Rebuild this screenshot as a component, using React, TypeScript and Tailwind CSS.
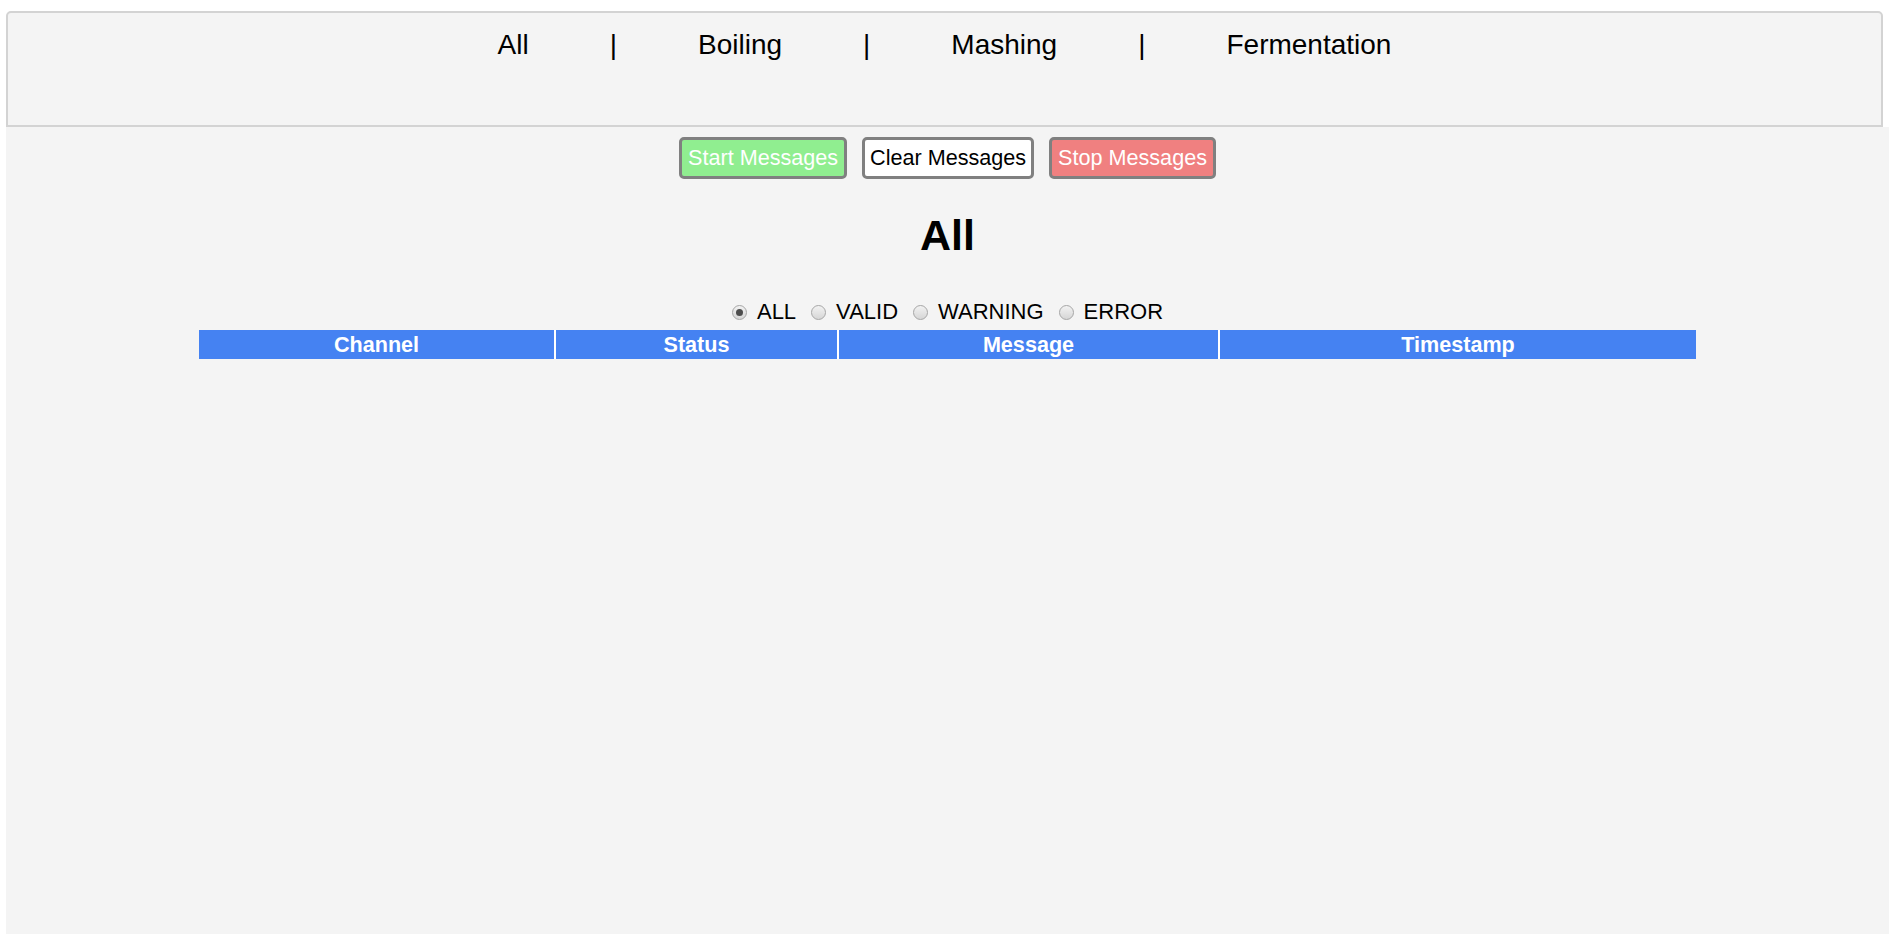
import React from "react";

const tabs = ["All", "Boiling", "Mashing", "Fermentation"];
const filters = ["ALL", "VALID", "WARNING", "ERROR"];
const columns = [
  { label: "Channel", width: "w-[355px]" },
  { label: "Status", width: "w-[283px]" },
  { label: "Message", width: "w-[381px]" },
  { label: "Timestamp", width: "w-[478px]" },
];

function Radio({ checked }: { checked?: boolean }) {
  return (
    <span className="flex h-[15px] w-[15px] items-center justify-center rounded-full border border-[#a6a6a6] bg-gradient-to-b from-[#f2f2f2] to-[#d6d6d6]">
      {checked && <span className="h-[7px] w-[7px] rounded-full bg-[#4d4d4d]" />}
    </span>
  );
}

export default function App() {
  return (
    <div className="min-h-screen bg-white font-['Liberation_Sans',Arial,sans-serif] text-black">
      <div className="ml-[6px] flex min-h-[934px] flex-col pt-[11px]">
        <header className="h-[116px] w-[1877px] rounded-t-[5px] border-2 border-[#d3d3d3] bg-[#f4f4f4] pt-[16px]">
          <nav className="flex items-center justify-center gap-[81px] text-[28px] leading-[normal]">
            {tabs.map((tab, i) => (
              <React.Fragment key={tab}>
                {i > 0 && <span>|</span>}
                <a className="cursor-pointer">{tab}</a>
              </React.Fragment>
            ))}
          </nav>
        </header>

        <main className="flex flex-1 flex-col items-center bg-[#f4f4f4] pt-[10px] text-[21.6px] leading-[normal]">
          <div className="flex gap-[15px]">
            <button className="rounded-[5px] border-[3px] border-[#808080] bg-[#90ee90] px-[6px] py-[5px] text-white">
              Start Messages
            </button>
            <button className="rounded-[5px] border-[3px] border-[#808080] bg-white px-[5px] py-[5px] text-black">
              Clear Messages
            </button>
            <button className="rounded-[5px] border-[3px] border-[#808080] bg-[#f08080] px-[6px] py-[5px] text-white">
              Stop Messages
            </button>
          </div>

          <h1 className="mt-[32px] text-[43px] font-bold leading-[normal]">All</h1>

          <div className="mt-[39px] flex items-center text-[22px]">
            {filters.map((f, i) => (
              <label key={f} className="ml-[15px] flex items-center gap-[10px] first:ml-0">
                <Radio checked={i === 0} />
                <span>{f}</span>
              </label>
            ))}
          </div>

          <table className="mt-[5px] border-separate border-spacing-0">
            <thead>
              <tr className="bg-[#4582f2] text-white">
                {columns.map((c, i) => (
                  <th
                    key={c.label}
                    className={`${c.width} h-[29px] p-0 text-center text-[21.6px] font-bold ${i > 0 ? "border-l-2 border-white" : ""}`}
                  >
                    {c.label}
                  </th>
                ))}
              </tr>
            </thead>
            <tbody />
          </table>
        </main>
      </div>
    </div>
  );
}
